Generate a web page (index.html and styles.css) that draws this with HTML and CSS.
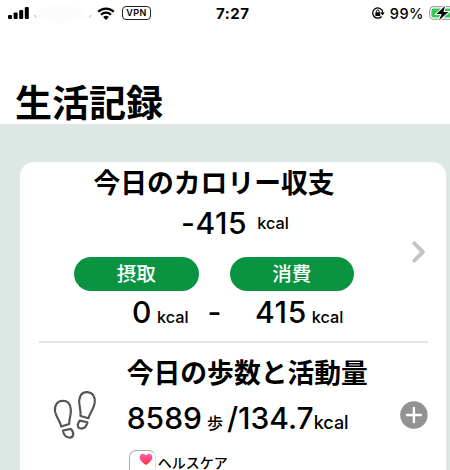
FILE: index.html
```html
<!DOCTYPE html>
<html lang="ja">
<head>
  <meta charset="UTF-8">
  <meta name="viewport" content="width=device-width, initial-scale=1.0">
  <title>生活記録</title>
  <link rel="stylesheet" href="styles.css">
</head>
<body>
  <div class="status-bar">
    <div class="status-left">
      <svg class="signal" viewBox="0 0 21 12" width="21" height="12">
        <rect x="0" y="8" width="4" height="4" rx="1"/>
        <rect x="5.6" y="5.6" width="4" height="6.4" rx="1"/>
        <rect x="11.2" y="3" width="4" height="9" rx="1"/>
        <rect x="16.8" y="0" width="4" height="12" rx="1"/>
      </svg>
      <svg class="carrier" viewBox="0 0 58 20" width="58" height="20">
        <ellipse cx="27" cy="11" rx="25" ry="9" fill="#fcfcfc"/>
        <path d="M.5 12l1.5 2.5M57 12l-1.5 2.5" stroke="#aaa" fill="none"/>
      </svg>
      <svg class="wifi" viewBox="0 0 18 13" width="18" height="13">
        <path d="M1.2 4.8a11 11 0 0 1 15.6 0M4 7.7a7 7 0 0 1 10 0" fill="none" stroke="#000" stroke-width="2.3"/>
        <path d="M9 13L6.1 10.1a4.1 4.1 0 0 1 5.8 0z"/>
      </svg>
      <span class="vpn">VPN</span>
    </div>
    <div class="clock">7:27</div>
    <div class="status-right">
      <svg class="lock" viewBox="0 0 14 12" width="14" height="12">
        <path d="M11.2 3.4A5.1 5.1 0 1 0 10.6 9.5M11 3A5.1 5.1 0 0 1 11.5 6" fill="none" stroke="#000" stroke-width="1.3"/>
        <path d="M9.4 5.6h4.2l-2.1 2.9z"/>
        <rect x="4.3" y="5.3" width="5" height="3.6" rx=".6"/>
        <path d="M5.4 5.5V4.4a1.4 1.4 0 0 1 2.8 0v1.1" fill="none" stroke="#000"/>
      </svg>
      <span class="percent">99%</span>
      <svg class="battery" viewBox="0 0 21 16" width="21" height="16">
        <rect x=".7" y="1.7" width="26" height="12.6" rx="4" fill="#fff" stroke="#a5a5a5" stroke-width="1.2"/>
        <rect x="2.4" y="3.4" width="24" height="9.2" rx="2.4" fill="#35c759"/>
        <path d="M16 1L7.6 9h5L10 15.2 19.4 7h-5z" stroke="#fff" stroke-width="2" paint-order="stroke"/>
      </svg>
    </div>
  </div>

  <header class="header">
    <h1>生活記録</h1>
  </header>

  <main class="main">
    <div class="card">
      <section class="calorie">
        <div class="calorie-body">
          <h2>今日のカロリー収支</h2>
          <div class="total"><span class="num">-415</span><span class="unit">kcal</span></div>
          <div class="pills">
            <span class="pill">摂取</span>
            <span class="pill">消費</span>
          </div>
          <div class="detail">
            <span class="num">0</span><span class="unit">kcal</span>
            <span class="num minus">-</span>
            <span class="num">415</span><span class="unit">kcal</span>
          </div>
        </div>
        <svg class="chevron" viewBox="0 0 14 22" width="14" height="22">
          <path d="M2.4 2.4L10.8 11 2.4 19.6" fill="none" stroke="#c4c4c6" stroke-width="4" stroke-linecap="round" stroke-linejoin="round"/>
        </svg>
      </section>

      <section class="steps">
        <svg class="foot" viewBox="36 24 138 156" width="46" height="52" fill="none" stroke="#555" stroke-width="6.5" stroke-linejoin="round">
          <path d="M64 140L88 132C87 117 94 106 93 89C92 71 82 62 68 62C52 63 43 75 45 94C48 111 60 122 64 140Z"/>
          <path d="M69 152L93 147C98 152 101 158 100 165C98 172 93 174 87 173C76 171 71 164 69 152Z"/>
          <path d="M122 108L146 115C150 99 163 86 165 67C166 48 158 37 143 36C129 35 120 45 118 61C117 77 124 90 122 108Z"/>
          <path d="M120 122L143 127C141 138 136 145 125 146C117 146 113 141 114 134C115 129 117 125 120 122Z"/>
        </svg>
        <div class="steps-body">
          <h2>今日の歩数と活動量</h2>
          <div class="steps-value">
            <span class="num">8589</span><span class="walk">歩</span><span class="num">/134.7</span><span class="unit">kcal</span>
          </div>
          <div class="source">
            <span class="health-icon">
              <svg viewBox="0 0 14 13" width="14" height="13">
                <defs>
                  <linearGradient id="heart" x1="0" y1="0" x2="0" y2="1">
                    <stop offset="0" stop-color="#ff5fae"/>
                    <stop offset="1" stop-color="#ff2f45"/>
                  </linearGradient>
                </defs>
                <path d="M7 12C4 10 .7 7.3 .7 4.2C.7 2.2 2.1 .8 3.9 .8C5.3 .8 6.4 1.6 7 2.7C7.6 1.6 8.7 .8 10.1 .8C11.9 .8 13.3 2.2 13.3 4.2C13.3 7.3 10 10 7 12Z" fill="url(#heart)"/>
              </svg>
            </span>
            <span class="source-name">ヘルスケア</span>
          </div>
        </div>
        <svg class="add" viewBox="0 0 28 28" width="28" height="28">
          <circle cx="14" cy="14" r="13.8" fill="#929292"/>
          <path d="M14 7v14M7 14h14" stroke="#fff" stroke-width="2.4" stroke-linecap="round"/>
        </svg>
      </section>
    </div>
  </main>
</body>
</html>
```
FILE: styles.css
```css
* {
  box-sizing: border-box;
}

body {
  margin: 0;
  width: 450px;
  height: 470px;
  overflow: hidden;
  display: flex;
  flex-direction: column;
  background: #fff;
  color: #000;
  font-family: Inter, "Noto Sans CJK JP", sans-serif;
}

h1, h2 {
  margin: 0;
  font-family: "Noto Sans CJK JP", sans-serif;
  font-weight: 700;
  white-space: nowrap;
}

/* status bar */
.status-bar {
  flex: none;
  display: grid;
  grid-template-columns: 208px auto 1fr;
  align-items: center;
  height: 26px;
  padding-left: 8px;
}

.status-left,
.status-right {
  display: flex;
  align-items: center;
}

.status-right {
  justify-content: flex-end;
}

.carrier {
  margin: 0 5px 0 5px;
}

.wifi {
  margin-right: 7px;
}

.vpn {
  width: 29px;
  height: 14px;
  border: 1.3px solid #222;
  border-radius: 4px;
  font-size: 9px;
  line-height: 12px;
  font-weight: 600;
  letter-spacing: 0.5px;
  text-align: center;
}

.clock {
  font-size: 15px;
  font-weight: 700;
  letter-spacing: 0.5px;
}

.percent {
  margin: 0 5px 0 5px;
  font-size: 14.5px;
  font-weight: 500;
  letter-spacing: 0.5px;
}

/* header */
.header {
  flex: none;
  height: 98px;
  padding: 48px 0 0 15px;
}

.header h1 {
  font-size: 37px;
  line-height: 54px;
}

/* card */
.main {
  flex: 1;
  min-height: 0;
  padding: 38px 4px 0 20px;
  background: #dde7e3;
}

.card {
  height: 100%;
  overflow: hidden;
  padding: 0 18px 0 19px;
  border-radius: 14px 14px 0 0;
  background: #fff;
}

.card h2 {
  font-size: 26.8px;
  line-height: 40px;
}

.num {
  font-size: 30px;
  line-height: 36px;
  font-weight: 500;
}

.unit {
  font-size: 16.3px;
  font-weight: 500;
}

.calorie {
  display: flex;
  justify-content: space-between;
  height: 181px;
  border-bottom: 2px solid #e3e3e3;
}

.calorie-body {
  width: 350px;
  text-align: center;
}

.calorie h2 {
  height: 43px;
}

.total {
  display: flex;
  align-items: baseline;
  height: 51.5px;
  gap: 10px;
  padding-left: 142px;
}

.total .num {
  letter-spacing: 0.6px;
}

.total .unit {
  position: relative;
  top: -5px;
}

.pills {
  display: flex;
  padding-left: 35px;
  gap: 31px;
}

.pill {
  width: 124.5px;
  height: 34px;
  border-radius: 17px;
  background: #0a9442;
  color: #fff;
  font-size: 19.6px;
  line-height: 34px;
  font-weight: 500;
}

.detail {
  display: flex;
  align-items: baseline;
  padding: 3px 0 0 93px;
}

.detail .num {
  letter-spacing: 0.6px;
}

.detail .unit {
  margin-left: 5px;
}

.detail .minus {
  margin: 0 33px 0 19px;
}

.chevron {
  margin: 79px 2px 0 0;
}

.steps {
  display: flex;
}

.foot {
  margin: 45px 29px 0 13px;
}

.steps-body {
  width: 245px;
  padding-top: 9px;
}

.steps-value {
  display: flex;
  align-items: baseline;
  height: 58px;
  padding-top: 8px;
}

.walk {
  margin: 0 4px 0 5px;
  font-size: 16px;
  line-height: 20px;
  font-weight: 500;
}

.steps .unit {
  font-size: 18px;
}

.source {
  display: flex;
  padding-left: 2px;
}

.health-icon {
  width: 27px;
  height: 27px;
  padding: 2px 0 0 9px;
  border: 1.5px solid #aaa;
  border-right-color: #ddd;
  border-radius: 7px;
}

.health-icon svg {
  display: block;
}

.source-name {
  margin-left: 2px;
  font-size: 14px;
  line-height: 25px;
  font-weight: 500;
}

.add {
  margin: 58px 0 0 30px;
}
```
